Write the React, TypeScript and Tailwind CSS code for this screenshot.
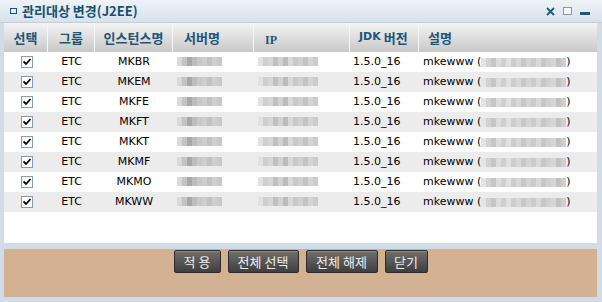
import type { ReactNode } from 'react';

const rows = ['MKBR', 'MKEM', 'MKFE', 'MKFT', 'MKKT', 'MKMF', 'MKMO', 'MKWW'];

const ko = { fontFamily: '"Noto Sans CJK KR", "Noto Sans", sans-serif' };
const latin = { fontFamily: 'Tahoma, "DejaVu Sans", "Liberation Sans", sans-serif' };

// pixelated redaction blocks (the reference blurs these values)
function Mosaic({ cells }: { cells: string[] }) {
  return (
    <span className="inline-flex h-[9px] align-middle">
      {cells.map((c, i) => (
        <span key={i} className="w-[5px] h-full" style={{ background: c }} />
      ))}
    </span>
  );
}

const server = ['#d9d9d9', '#c4c4c4', '#a8a8a8', '#bdbdbd', '#c8c8c8', '#cdcdcd', '#c2c2c2', '#cfcfcf', '#c9c9c9'];
const ip = ['#e2e2e2', '#cfcfcf', '#d6d6d6', '#c0c0c0', '#d2d2d2', '#bcbcbc', '#d8d8d8', '#c9c9c9', '#d0d0d0', '#c4c4c4', '#d5d5d5', '#cccccc'];
const desc = ['#e4e4e4', '#d2d2d2', '#c6c6c6', '#dcdcdc', '#cfcfcf', '#e0e0e0', '#cdcdcd', '#d8d8d8', '#c8c8c8', '#d4d4d4', '#cbcbcb', '#d9d9d9', '#c7c7c7', '#d0d0d0', '#d6d6d6', '#c2c2c2', '#cfcfcf'];

function Check() {
  return (
    <span className="inline-flex w-[12px] h-[12px] border border-[#7f9db9] bg-white items-center justify-center">
      <svg width="8" height="8" viewBox="0 0 8 8">
        <path d="M0.5 3.5 L3 6 L7.5 1" stroke="#000" strokeWidth="1.8" fill="none" />
      </svg>
    </span>
  );
}

function Btn({ w, children }: { w: string; children: ReactNode }) {
  return (
    <button
      className={`${w} h-[23px] rounded-[2px] border border-[#2b2b2b] bg-gradient-to-b from-[#707070] to-[#3f3f3f] text-[#ececec] text-[13px] leading-none shadow-[inset_0_1px_0_#8a8a8a]`}
      style={ko}
    >
      {children}
    </button>
  );
}

export default function App() {
  return (
    <div className="w-[602px] h-[302px] bg-[#d2dce6] flex flex-col overflow-hidden">
      {/* title bar */}
      <div className="h-[23px] flex items-center bg-gradient-to-b from-[#eef3f7] to-[#d8e2eb] border-b border-[#c3d0dc] pl-[10px] pr-[12px]">
        <span className="w-[7px] h-[6px] border border-[#1b5270] mr-[5px]" />
        <span className="text-[13px] font-bold text-[#16506f]" style={ko}>
          관리대상 변경(J2EE)
        </span>
        <div className="ml-auto flex items-center gap-[8px]">
          <svg width="9" height="9" viewBox="0 0 9 9">
            <path d="M1 1 L8 8 M8 1 L1 8" stroke="#1c5a78" strokeWidth="1.8" />
          </svg>
          <span className="w-[9px] h-[8px] border border-[#8a9aa8] bg-[#f4f6f8]" />
          <span className="w-[10px] h-[3px] bg-[#1c5a78] mt-[5px]" />
        </div>
      </div>

      <div className="flex-1 flex flex-col pl-[4px] pr-[5px]">
        {/* table */}
        <div className="h-[220px] bg-white">
          <div
            className="h-[29px] flex bg-gradient-to-b from-[#f4f4f4] to-[#c8c8c8] text-[#1d5478] text-[13px] font-bold"
            style={ko}
          >
            <div className="w-[44px] flex items-center justify-center border-r border-[#f6f6f6]">선택</div>
            <div className="w-[47px] flex items-center justify-center border-r border-[#f6f6f6]">그룹</div>
            <div className="w-[78px] flex items-center justify-center border-r border-[#f6f6f6]">인스턴스명</div>
            <div className="w-[81px] flex items-center pl-[11px] border-r border-[#f6f6f6]">서버명</div>
            <div className="w-[96px] flex items-center pl-[11px] pt-[4px] text-[12px] border-r border-[#f6f6f6]" style={{ fontFamily: '"Liberation Serif", serif' }}>
              IP
            </div>
            <div className="w-[69px] flex items-center pl-[9px] border-r border-[#f6f6f6]">
              <span className="text-[11px] mr-[3px]" style={{ fontFamily: '"DejaVu Sans", sans-serif' }}>JDK</span>버전
            </div>
            <div className="flex-1 flex items-center pl-[9px]">설명</div>
          </div>

          {rows.map((name, i) => (
            <div
              key={name}
              className={`h-[20px] flex items-center text-[11px] text-black ${i % 2 ? 'bg-[#ececec]' : 'bg-white'}`}
              style={latin}
            >
              <div className="w-[44px] flex justify-center pl-[1px]">
                <Check />
              </div>
              <div className="w-[47px] text-center">ETC</div>
              <div className="w-[78px] text-center">{name}</div>
              <div className="w-[81px] pl-[4px]">
                <Mosaic cells={server} />
              </div>
              <div className="w-[96px] pl-[4px]">
                <Mosaic cells={ip} />
              </div>
              <div className="w-[69px] pl-[3px]">1.5.0_16</div>
              <div className="flex-1 pl-[4px] flex items-center">
                mkewww (
                <Mosaic cells={desc} />)
              </div>
            </div>
          ))}
        </div>

        {/* footer */}
        <div className="mt-[6px] h-[48px] bg-[#d3b193] flex justify-center gap-[7px] pt-[1px]">
          <Btn w="w-[47px]">적 용</Btn>
          <Btn w="w-[71px]">전체 선택</Btn>
          <Btn w="w-[72px]">전체 해제</Btn>
          <Btn w="w-[43px]">닫기</Btn>
        </div>
      </div>
    </div>
  );
}
